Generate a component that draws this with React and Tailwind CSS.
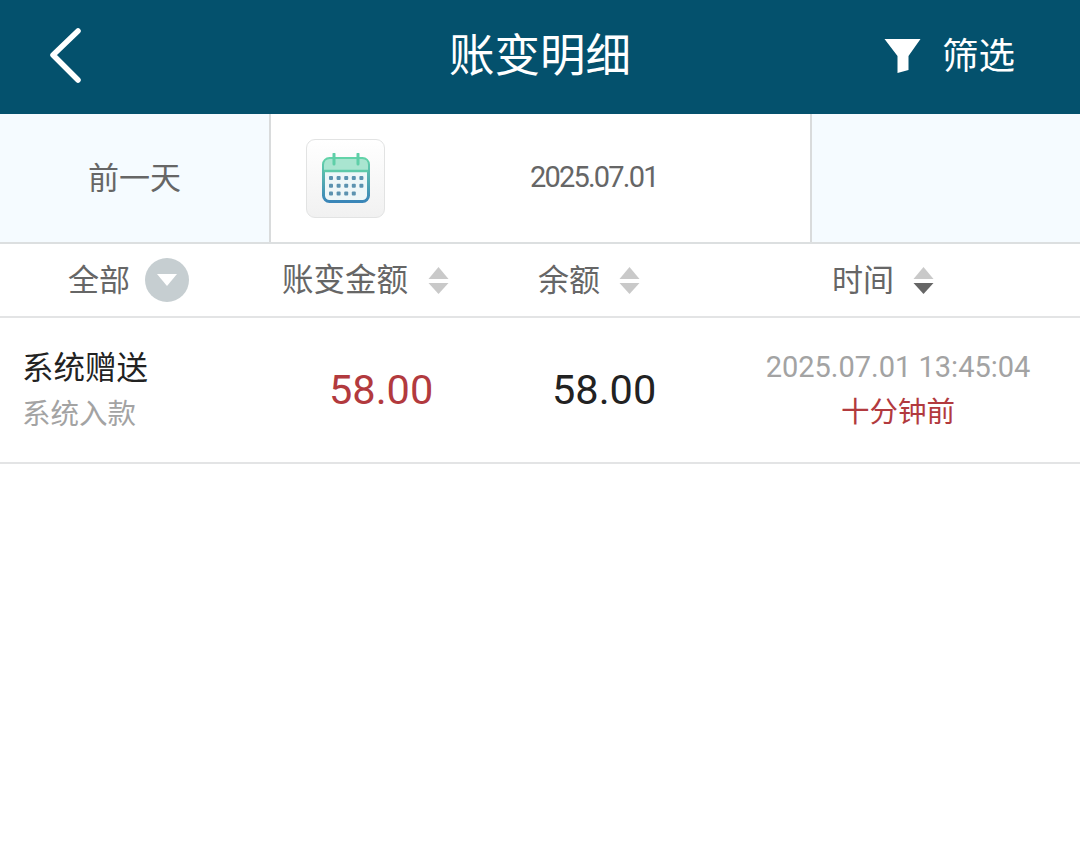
const cjk = "font-['Roboto','Noto_Sans_CJK_SC',sans-serif]";

function Sort({ down = "#c9c9c9" }) {
  return (
    <svg width="23" height="29" viewBox="0 0 22 29" className="shrink-0">
      <path d="M11 1 L21 13 H1 Z" fill="#c9c9c9" strokeLinejoin="round" />
      <path d="M1 17 H21 L11 28 Z" fill={down} strokeLinejoin="round" />
    </svg>
  );
}

function CalendarIcon() {
  const rows = [
    [0, 1, 2, 3, 4],
    [0, 1, 2, 3, 4],
    [0, 1, 2, 3],
  ];
  return (
    <svg width="48" height="50" viewBox="0 0 48 50">
      <defs>
        <linearGradient id="calGrad" x1="0" y1="0" x2="0" y2="1">
          <stop offset="0" stopColor="#62d3a8" />
          <stop offset="0.45" stopColor="#56b0b0" />
          <stop offset="1" stopColor="#3a86b8" />
        </linearGradient>
      </defs>
      <rect x="1.5" y="5.5" width="45" height="43" rx="6" fill="#eef7f8" stroke="url(#calGrad)" strokeWidth="3" />
      <path d="M2 12 Q2 6 8 6 H40 Q46 6 46 12 V17 H2 Z" fill="#a9e5d0" />
      <path d="M2 18 H46" stroke="#5fcaa9" strokeWidth="2.5" />
      <path d="M12 1 V11 M36 1 V11" stroke="#5fcfa8" strokeWidth="3" strokeLinecap="round" />
      {rows.map((r, y) =>
        r.map((x) => (
          <rect key={`${y}-${x}`} x={7 + x * 7.6} y={23 + y * 7.8} width="4" height="4" rx="1" fill="#5b93b0" />
        ))
      )}
    </svg>
  );
}

export default function App() {
  return (
    <div className={`w-[1080px] h-[867px] bg-white overflow-hidden ${cjk}`}>
      <header className="h-[114px] bg-[#04516d] grid grid-cols-[1fr_auto_1fr] items-center text-white">
        <div className="pl-[48px] pb-[2px] flex items-center">
          <svg width="36" height="58" viewBox="0 0 36 58" fill="none">
            <path d="M30 4 L5 28 L30 53" stroke="#fff" strokeWidth="5.5" strokeLinecap="round" strokeLinejoin="round" />
          </svg>
        </div>
        <h1 className="text-[45.5px] leading-none font-normal">账变明细</h1>
        <div className="flex items-center justify-end pr-[65px] gap-[21px]">
          <svg width="37" height="36" viewBox="0 0 36 36" className="mb-[2px]">
            <path d="M0 1 H36 L24 18 V32 L13 35 V18 Z" fill="#fff" />
          </svg>
          <span className="text-[36.5px] leading-none">筛选</span>
        </div>
      </header>

      <div className="h-[130px] flex border-b-2 border-[#dcdfe0] text-[#666]">
        <div className="w-[271px] bg-[#f5fbff] border-r-2 border-[#d9dbdc] flex items-center justify-center text-[31px] pt-[2px]">
          前一天
        </div>
        <div className="w-[541px] border-r-2 border-[#d9dbdc] flex items-center pl-[35px]">
          <div className="w-[79px] h-[79px] rounded-[9px] border border-[#e2e3e3] bg-gradient-to-b from-white to-[#f1f1f1] flex items-center justify-center">
            <CalendarIcon />
          </div>
          <span className="ml-[145px] text-[29px] tracking-[-1.8px]">2025.07.01</span>
        </div>
        <div className="flex-1 bg-[#f5fbff]" />
      </div>

      <div className="h-[74px] flex items-center border-b-2 border-[#e3e4e5] text-[31px] text-[#666]">
        <div className="flex items-center w-[282px] pl-[68px]">
          <span className="pt-[2px]">全部</span>
          <span className="ml-[15px] w-[44px] h-[44px] rounded-full bg-[#c6ced1] flex items-center justify-center">
            <svg width="22" height="14" viewBox="0 0 22 14">
              <path d="M1 1 H21 L11 13 Z" fill="#fff" />
            </svg>
          </span>
        </div>
        <div className="flex items-center w-[256px]">
          <span className="pt-[2px] text-[31.5px]">账变金额</span>
          <span className="ml-[19px]"><Sort /></span>
        </div>
        <div className="flex items-center w-[294px]">
          <span className="pt-[2px]">余额</span>
          <span className="ml-[18px]"><Sort /></span>
        </div>
        <div className="flex items-center">
          <span className="pt-[2px]">时间</span>
          <span className="ml-[18px]"><Sort down="#666666" /></span>
        </div>
      </div>

      <div className="h-[146px] flex items-center border-b-2 border-[#e3e4e5]">
        <div className="w-[329px] pl-[22px] flex flex-col pt-[4px]">
          <span className="text-[31.5px] leading-[44px] text-[#222]">系统赠送</span>
          <span className="text-[28.5px] leading-[47px] text-[#a3a3a3]">系统入款</span>
        </div>
        <span className="w-[223px] text-[41.5px] pt-[1px] text-[#b23a3e]">58.00</span>
        <span className="w-[214px] text-[41.5px] pt-[1px] text-[#222]">58.00</span>
        <div className="w-[264px] flex flex-col items-center pt-[1px]">
          <span className="text-[29px] leading-[44px] whitespace-nowrap text-[#a3a3a3]">2025.07.01 13:45:04</span>
          <span className="text-[28.5px] leading-[47px] text-[#b23a3e]">十分钟前</span>
        </div>
      </div>
    </div>
  );
}
